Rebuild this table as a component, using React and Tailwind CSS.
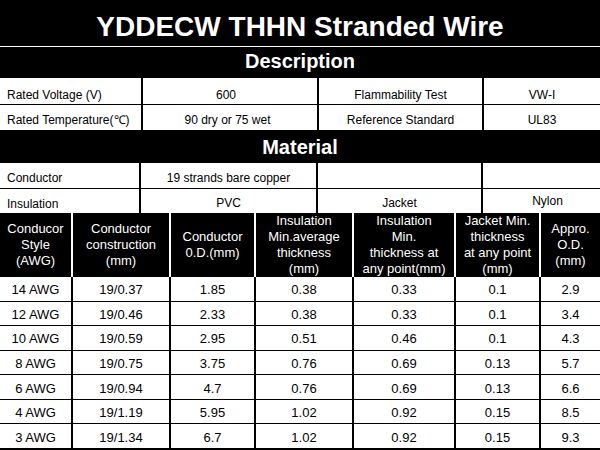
import React from "react";

const rows = [
  ["14 AWG", "19/0.37", "1.85", "0.38", "0.33", "0.1", "2.9"],
  ["12 AWG", "19/0.46", "2.33", "0.38", "0.33", "0.1", "3.4"],
  ["10 AWG", "19/0.59", "2.95", "0.51", "0.46", "0.1", "4.3"],
  ["8 AWG", "19/0.75", "3.75", "0.76", "0.69", "0.13", "5.7"],
  ["6 AWG", "19/0.94", "4.7", "0.76", "0.69", "0.13", "6.6"],
  ["4 AWG", "19/1.19", "5.95", "1.02", "0.92", "0.15", "8.5"],
  ["3 AWG", "19/1.34", "6.7", "1.02", "0.92", "0.15", "9.3"],
];

const heads = [
  ["Conducor", "Style", "(AWG)"],
  ["Conductor", "construction", "(mm)"],
  ["Conductor", "0.D.(mm)"],
  ["Insulation", "Min.average", "thickness", "(mm)"],
  ["Insulation", "Min.", "thickness at", "any point(mm)"],
  ["Jacket Min.", "thickness", "at any point", "(mm)"],
  ["Appro.", "O.D.", "(mm)"],
];

const cols = "grid grid-cols-[71px_96px_83px_96px_100px_83px_59px] gap-x-[2px]";
const infoCols = "grid grid-cols-[141px_174px_163px_116px] gap-x-[2px]";
const matCols = "grid grid-cols-[139px_175px_163px_117px] gap-x-[2px]";

export default function App() {
  return (
    <div className="w-[600px] h-[450px] bg-black flex flex-col overflow-hidden font-['Liberation_Sans',Arial,sans-serif]">
      {/* title */}
      <div className="h-[46px] pt-[8px] text-center text-white font-bold text-[28px] leading-[38px]">
        YDDECW THHN Stranded Wire
      </div>
      <div className="h-px bg-white" />

      {/* description */}
      <div className="h-[31px] text-center text-white font-bold text-[20px] leading-[28px]">
        Description
      </div>
      <div className="flex flex-col gap-px text-[12px] leading-[14px] text-black">
        <div className={`${infoCols} h-[26px]`}>
          <div className="bg-white pt-[10px] pl-[7px]">Rated Voltage (V)</div>
          <div className="bg-white pt-[10px] text-center pr-[8px]">600</div>
          <div className="bg-white pt-[10px] text-center">Flammability Test</div>
          <div className="bg-white pt-[10px] text-center">VW-I</div>
        </div>
        <div className={`${infoCols} h-[25px]`}>
          <div className="bg-white pt-[8px] pl-[7px]">Rated Temperature(℃)</div>
          <div className="bg-white pt-[8px] text-center pr-[5px]">90 dry or 75 wet</div>
          <div className="bg-white pt-[8px] text-center">Reference Standard</div>
          <div className="bg-white pt-[8px] text-center">UL83</div>
        </div>
      </div>

      {/* material */}
      <div className="h-[33px] text-center text-white font-bold text-[20px] leading-[34px]">
        Material
      </div>
      <div className="flex flex-col gap-px text-[12px] leading-[14px] text-black">
        <div className={`${matCols} h-[25px]`}>
          <div className="bg-white pt-[8px] pl-[7px]">Conductor</div>
          <div className="bg-white pt-[8px] text-center">19 strands bare copper</div>
          <div className="bg-white" />
          <div className="bg-white" />
        </div>
        <div className={`${matCols} h-[24px]`}>
          <div className="bg-white pt-[8px] pl-[7px]">Insulation</div>
          <div className="bg-white pt-[7px] text-center">PVC</div>
          <div className="bg-white pt-[7px] text-center">Jacket</div>
          <div className="bg-white pt-[5px] pl-[12px] text-center">Nylon</div>
        </div>
      </div>

      {/* table head */}
      <div className={`${cols} h-[64px] bg-white`}>
        {heads.map((h, i) => (
          <div
            key={i}
            className="bg-black flex flex-col items-center justify-center text-center text-white text-[13px] leading-[16px]"
          >
            {h.map((line, j) => (
              <span key={j} className="whitespace-nowrap">
                {line}
              </span>
            ))}
          </div>
        ))}
      </div>

      {/* table body */}
      <div className="h-[171px] flex flex-col gap-px">
        {rows.map((r, i) => (
          <div key={i} className={`${cols} flex-1`}>
            {r.map((c, j) => (
              <div
                key={j}
                className="bg-white flex items-center justify-center pt-[2px] text-[13px] leading-[15px] text-black"
              >
                {c}
              </div>
            ))}
          </div>
        ))}
      </div>
    </div>
  );
}
